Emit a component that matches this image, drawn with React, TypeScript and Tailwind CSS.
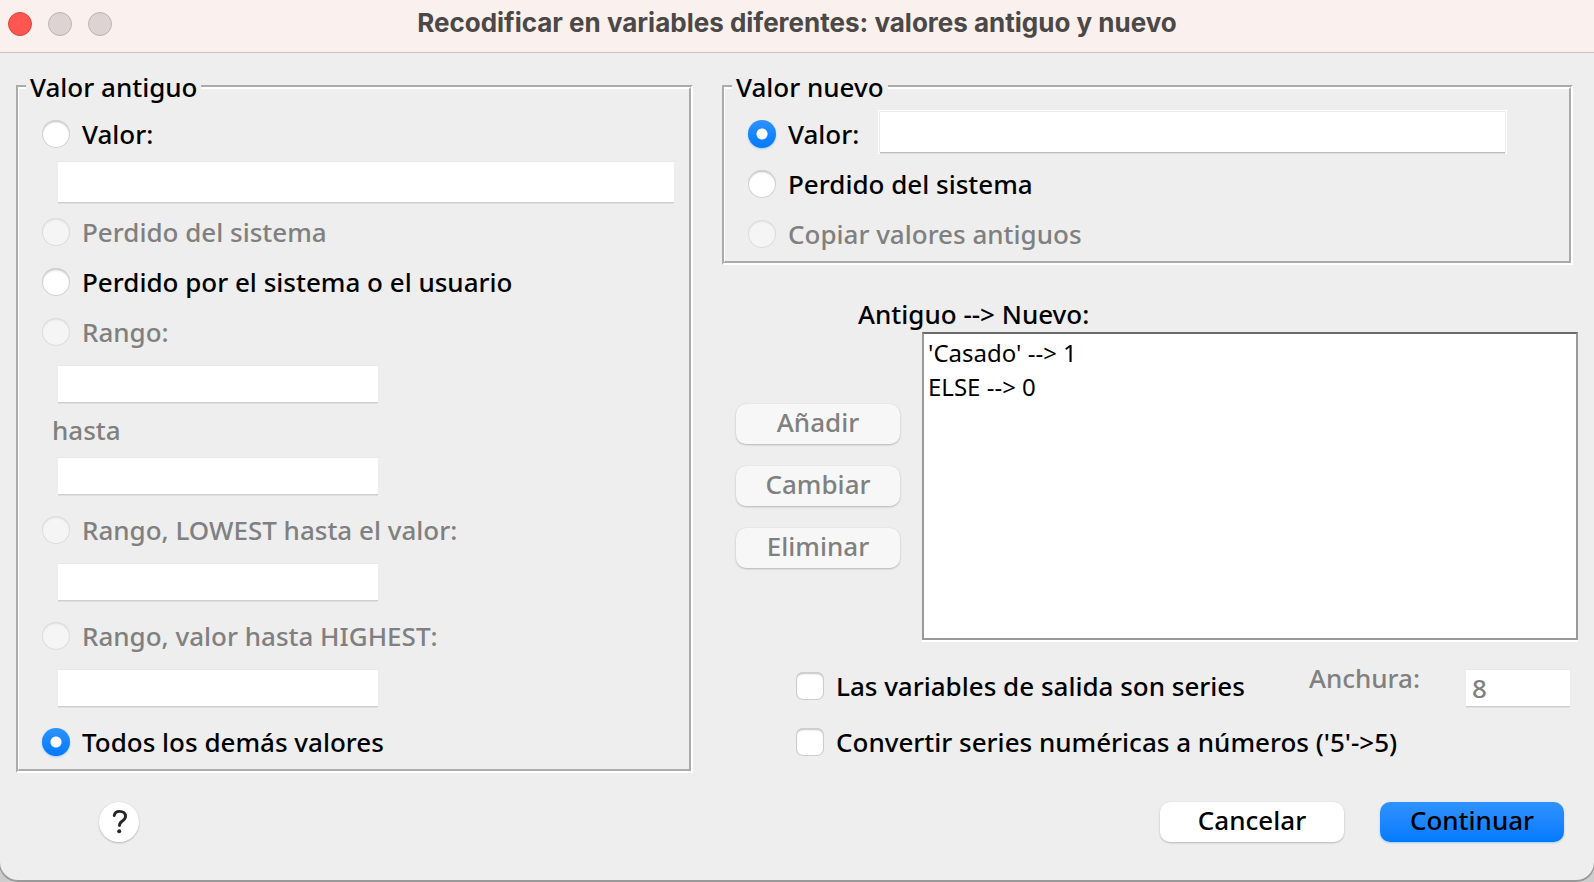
import { useState, type ReactNode } from "react";

const radioBase =
  "size-7 shrink-0 appearance-none rounded-full bg-white shadow-[inset_0_0_0_1px_#d2d2d2,inset_0_2px_2px_#c4c4c4] checked:bg-[radial-gradient(circle,#fff_0_5px,transparent_6px),linear-gradient(#2f92ff,#007aff)] checked:shadow-[0_1px_2px_#9cc8f5] disabled:bg-[#f5f5f5] disabled:shadow-[inset_0_0_0_1px_#dcdcdc,inset_0_2px_2px_#e4e4e4]";

const checkBase =
  "size-7 shrink-0 appearance-none rounded-[7px] bg-white shadow-[inset_0_0_0_1px_#cdcdcd,inset_0_2px_2px_#c4c4c4] checked:bg-[#007aff]";

const fieldBase =
  "block bg-white px-1.5 outline-none shadow-[0_-1px_0_#e8e8e8,0_1px_0_#cfcfcf,0_2px_0_#dedede] disabled:text-[#808080]";

const buttonBase =
  "h-10 rounded-[10px] pb-1 text-center shadow-[0_0_1px_#cfcfcf,0_1px_2px_#b4b4b4]";

type RadioProps = {
  group: string;
  value: string;
  selected: string;
  onSelect: (value: string) => void;
  disabled?: boolean;
  className: string;
  children: ReactNode;
};

function Radio({ group, value, selected, onSelect, disabled, className, children }: RadioProps) {
  return (
    <label className={`flex items-center gap-3 ${disabled ? "text-[#808080]" : "text-black"} ${className}`}>
      <input
        type="radio"
        name={group}
        value={value}
        checked={selected === value}
        onChange={() => onSelect(value)}
        disabled={disabled}
        className={radioBase}
      />
      {children}
    </label>
  );
}

function OldValue() {
  const [selected, setSelected] = useState("rest");
  const shared = { group: "old", selected, onSelect: setSelected };
  return (
    <fieldset className="min-w-0 border-4 border-l-[3px] border-white pr-[15px] pb-[11px] pl-[23px] [border-style:groove]">
      <legend className="-ml-4 h-8 px-1">Valor antiguo</legend>
      <Radio {...shared} value="value" className="mt-[15px] h-8">Valor:</Radio>
      <div className="pl-4">
        <input aria-label="Valor antiguo" className={`${fieldBase} mt-3 h-10 w-full`} />
      </div>
      <Radio {...shared} value="sysmis" disabled className="mt-3.5 h-8">Perdido del sistema</Radio>
      <Radio {...shared} value="missing" className="mt-[18px] h-8">Perdido por el sistema o el usuario</Radio>
      <Radio {...shared} value="range" disabled className="mt-[18px] h-8">Rango:</Radio>
      <input aria-label="Rango, desde" disabled className={`${fieldBase} mt-[18px] ml-4 h-9 w-80`} />
      <label htmlFor="range-end" className="mt-3 ml-2.5 block h-8 text-[#808080]">hasta</label>
      <input id="range-end" disabled className={`${fieldBase} mt-3 ml-4 h-9 w-80`} />
      <Radio {...shared} value="lowest" disabled className="mt-5 h-8">Rango, LOWEST hasta el valor:</Radio>
      <input aria-label="LOWEST hasta el valor" disabled className={`${fieldBase} mt-[18px] ml-4 h-9 w-80`} />
      <Radio {...shared} value="highest" disabled className="mt-5 h-8">Rango, valor hasta HIGHEST:</Radio>
      <input aria-label="Valor hasta HIGHEST" disabled className={`${fieldBase} mt-[18px] ml-4 h-9 w-80`} />
      <Radio {...shared} value="rest" className="mt-5 h-8">Todos los demás valores</Radio>
    </fieldset>
  );
}

function NewValue() {
  const [selected, setSelected] = useState("value");
  const shared = { group: "new", selected, onSelect: setSelected };
  return (
    <fieldset className="mr-[5px] min-w-0 border-4 border-l-[3px] border-white pb-[11px] pl-[23px] [border-style:groove]">
      <legend className="-ml-4 h-8 px-1">Valor nuevo</legend>
      <div className="mt-[9px] flex items-end pr-16">
        <Radio {...shared} value="value" className="h-9 w-[132px] shrink-0">Valor:</Radio>
        <input
          aria-label="Valor nuevo"
          className="h-10 min-w-0 flex-1 bg-white px-1.5 shadow-[0_1px_0_#bdbdbd,0_2px_0_#dcdcdc,0_0_0_1px_#ebebeb,0_0_0_2px_#fff] outline-none"
        />
      </div>
      <Radio {...shared} value="sysmis" className="mt-4 h-8">Perdido del sistema</Radio>
      <Radio {...shared} value="copy" disabled className="mt-[18px] h-8">Copiar valores antiguos</Radio>
    </fieldset>
  );
}

function Mappings() {
  return (
    <>
      <label htmlFor="mappings" className="mt-[33px] ml-[136px] block h-8">{"Antiguo --> Nuevo:"}</label>
      <div className="mt-0.5 flex items-start gap-[22px] pl-3.5">
        <div className="mt-[72px] flex w-[164px] shrink-0 flex-col gap-[22px] text-[#808080]">
          <button disabled className={`${buttonBase} bg-[#f7f7f7]`}>Añadir</button>
          <button disabled className={`${buttonBase} bg-[#f7f7f7]`}>Cambiar</button>
          <button disabled className={`${buttonBase} bg-[#f7f7f7]`}>Eliminar</button>
        </div>
        <select
          id="mappings"
          size={8}
          className="h-[308px] min-w-0 flex-1 appearance-none overflow-hidden border-2 border-[#999] border-t-[#6b6b6b] bg-white pt-0.5 text-[24px] leading-[34px] shadow-[0_2px_0_#fff] outline-none"
        >
          <option className="h-[34px] px-1 py-0 leading-[34px]">{"'Casado' --> 1"}</option>
          <option className="h-[34px] px-1 py-0 leading-[34px]">{"ELSE --> 0"}</option>
        </select>
      </div>
    </>
  );
}

function OutputOptions() {
  return (
    <>
      <div className="mt-[22px] flex items-start pr-2 pl-[74px]">
        <label className="mt-2 flex h-8 items-center gap-3">
          <input type="checkbox" className={checkBase} />
          Las variables de salida son series
        </label>
        <label htmlFor="width" className="mr-[46px] ml-auto h-8 text-[#808080]">Anchura:</label>
        <input id="width" disabled defaultValue="8" className={`${fieldBase} mt-2 h-9 w-[104px]`} />
      </div>
      <label className="mt-5 flex h-8 items-center gap-3 pl-[74px]">
        <input type="checkbox" className={checkBase} />
        {"Convertir series numéricas a números ('5'->5)"}
      </label>
    </>
  );
}

export default function App() {
  return (
    <div className="flex min-h-screen flex-col bg-[#cdcdcd] pb-0.5 font-['Noto_Sans',sans-serif] text-[26px] leading-8 font-medium text-black">
      <div className="flex flex-1 flex-col rounded-b-[18px] bg-[#eee] shadow-[0_1px_0_1px_#999]">
        <header className="grid h-[53px] grid-cols-[1fr_auto_1fr] items-start border-b border-[#c3c1c1] bg-[#faf0ee]">
          <div className="flex gap-4 pt-3 pl-2">
            <button aria-label="Cerrar" className="size-6 rounded-full border border-[#e0443e] bg-[#fe5650]" />
            <button aria-label="Minimizar" disabled className="size-6 rounded-full border border-[#bcb3b2] bg-[#dcd3d2]" />
            <button aria-label="Ampliar" disabled className="size-6 rounded-full border border-[#bcb3b2] bg-[#dcd3d2]" />
          </div>
          <h1 className="pt-[11px] font-[Inter,sans-serif] text-[26px] leading-6 font-bold text-[#4b4847]">
            Recodificar en variables diferentes: valores antiguo y nuevo
          </h1>
        </header>
        <main className="grid grid-cols-[677fr_856fr] items-start gap-x-[29px] px-4 pt-[18px]">
          <OldValue />
          <div className="min-w-0">
            <NewValue />
            <Mappings />
            <OutputOptions />
          </div>
        </main>
        <footer className="mt-[29px] flex items-center pr-[30px] pb-[38px] pl-[99px]">
          <button
            aria-label="Ayuda"
            className="flex size-10 items-center justify-center rounded-full bg-white shadow-[0_0_1px_#cfcfcf,0_1px_2px_#b4b4b4]"
          >
            <svg viewBox="0 0 40 40" className="size-10" fill="none" stroke="#262626" strokeWidth="2.9" strokeLinecap="round" strokeLinejoin="round">
              <path d="M15.200 13.600c.5-2.700 2.500-4.200 5.400-4.200 3.500 0 5.900 1.900 5.900 4.900 0 2.400-1.400 3.700-3.400 5-1.900 1.200-2.600 2.200-2.600 4.300" />
              <circle cx="20.200" cy="29.200" r="2" fill="#262626" stroke="none" />
            </svg>
          </button>
          <button className={`${buttonBase} ml-auto w-[184px] bg-white`}>Cancelar</button>
          <button className="ml-9 h-10 w-[184px] rounded-[10px] bg-linear-to-b from-[#2f92ff] to-[#007aff] pb-1 text-center shadow-[0_1px_2px_#9cc8f5]">
            Continuar
          </button>
        </footer>
      </div>
    </div>
  );
}
